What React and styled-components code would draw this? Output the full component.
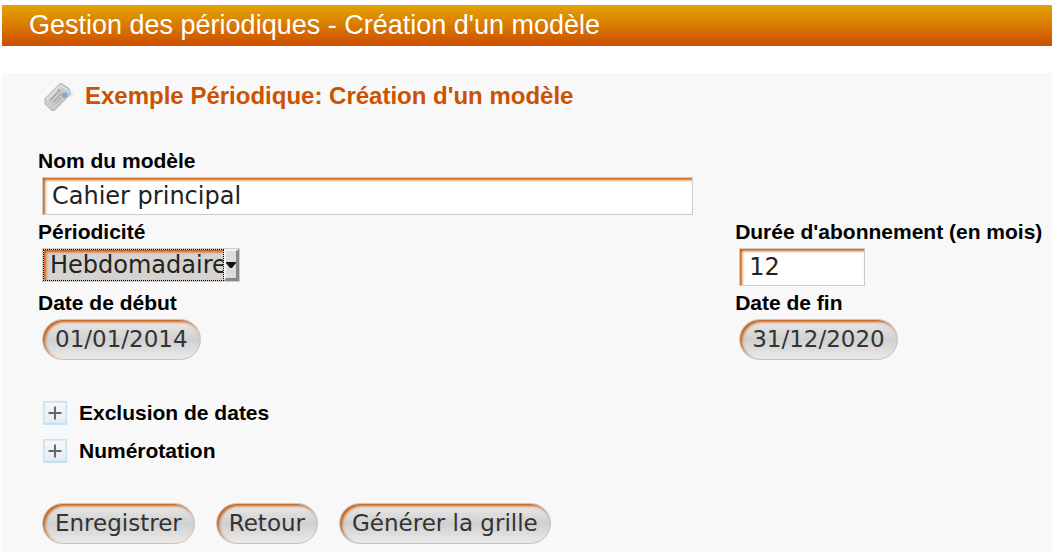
import React, { useState } from "react";
import styled, { createGlobalStyle, css } from "styled-components";

const GlobalStyle = createGlobalStyle`
  *, *::before, *::after { box-sizing: border-box; }
  html, body, #root { height: 100%; }
  body {
    margin: 0;
    background: #fff;
    color: #000;
    font-family: "Liberation Sans", Arial, sans-serif;
  }
`;

const Page = styled.div`
  display: flex;
  flex-direction: column;
  gap: 27px;
  min-height: 100%;
  padding: 5px 0 0 2px;
`;

const Banner = styled.h1`
  margin: 0;
  padding: 0 27px;
  font-size: 27px;
  font-weight: 400;
  line-height: 41px;
  color: #fff;
  background: linear-gradient(#e4a404, #cc4e00);
`;

const Panel = styled.main`
  flex: 1;
  padding: 7px 0 8px 36px;
  background: #f8f8f8;
`;

const TitleRow = styled.div`
  display: flex;
  align-items: center;
  gap: 10px;
  padding-left: 4px;
  margin-bottom: 37px;
`;

const Title = styled.h2`
  margin: 0;
  font-size: 24px;
  line-height: 32px;
  color: #cc5200;
`;

const Fields = styled.div`
  display: grid;
  grid-template-columns: minmax(0, 11fr) minmax(0, 5fr);
`;

const Field = styled.div`
  display: flex;
  flex-direction: column;
  align-items: flex-start;
  gap: 4px;
  min-height: 71px;
  padding-left: 4px;
  grid-column: ${(p) => (p.$wide ? "1 / -1" : "auto")};
`;

const Label = styled.label`
  margin-left: -4px;
  font-size: 21px;
  font-weight: 700;
  line-height: 24px;
  white-space: nowrap;
`;

const controlText = css`
  font-family: "DejaVu Sans", Verdana, sans-serif;
  font-size: 24px;
`;

const warmEdge = css`
  box-shadow: inset 2px 2px 3px #c85a0a;
`;

const TextInput = styled.input`
  ${controlText}
  width: ${(p) => (p.$short ? "126px" : "100%")};
  max-width: 651px;
  height: 38px;
  padding: 0 9px;
  color: #222;
  background: #fff;
  border: 1px solid #ccc;
  border-radius: 0;
  ${warmEdge}
`;

const SelectBox = styled.div`
  position: relative;
  width: 198px;
  height: 34px;
  border: 1px solid #ccc;
`;

const Select = styled.select`
  ${controlText}
  display: block;
  appearance: none;
  width: 181px;
  height: 32px;
  padding: 0 0 0 6px;
  color: #222;
  background: #d6d2d0;
  border: 1px dotted #000;
  border-radius: 0;
  ${warmEdge}
`;

const SelectArrow = styled.span`
  position: absolute;
  top: 0;
  right: 0;
  display: flex;
  align-items: center;
  justify-content: center;
  width: 15px;
  height: 32px;
  background: #dedbd9;
  border: solid;
  border-width: 2px 3px 3px 2px;
  border-color: #f4f4f4 #888 #888 #f4f4f4;
  pointer-events: none;
`;

const PillButton = styled.button`
  ${controlText}
  height: 41px;
  padding: 0 12px 2px;
  font-size: 23px;
  line-height: 28px;
  color: #333;
  white-space: nowrap;
  background: linear-gradient(#eaeaea, #d0d0d0 50%, #eaeaea);
  border: 1px solid #c4c4c4;
  border-radius: 21px;
  ${warmEdge}
`;

const Sections = styled.div`
  display: flex;
  flex-direction: column;
  align-items: flex-start;
  gap: 14px;
  padding-left: 5px;
  margin-top: 39px;
`;

const SectionToggle = styled.button`
  display: flex;
  align-items: center;
  gap: 12px;
  padding: 0;
  font: 700 21px/24px "Liberation Sans", Arial, sans-serif;
  color: #000;
  background: none;
  border: 0;
`;

const Actions = styled.div`
  display: flex;
  flex-wrap: wrap;
  gap: 21px;
  padding-left: 4px;
  margin-top: 40px;
`;

function TagIcon() {
  return (
    <svg width="33" height="32" viewBox="0 0 33 32" aria-hidden="true">
      <defs>
        <linearGradient id="tag" x1="0" y1="0" x2="1" y2="1">
          <stop offset="0" stopColor="#dedede" />
          <stop offset="1" stopColor="#b8b8b8" />
        </linearGradient>
      </defs>
      <path d="M3 18.500 17 4.500Q18.500 3 20.500 4L27 8.500 28.500 14 12.500 30.500H10L3 24Z" fill="url(#tag)" stroke="#b4b4b4" />
      <path d="M4.500 20 18.500 5.500 26 10.500" fill="none" stroke="#ececec" />
      <path d="M8 20.500 17.500 10.500M11.500 22 19 14M14.500 23.500 21 17M15.500 9.500 19 11.500" stroke="#a8a8a8" strokeWidth="1.500" />
      <path d="M5 23 11 28 27 12" fill="none" stroke="#dadada" />
      <circle cx="22.500" cy="15" r="2.800" fill="#78acd8" />
      <path d="M27 12Q30.500 11 30.500 14L28 17" fill="none" stroke="#d8d8d8" />
    </svg>
  );
}

function ExpandIcon({ open }) {
  return (
    <svg width="24" height="24" viewBox="0 0 24 24" aria-hidden="true">
      <defs>
        <linearGradient id="expand" x1="0" y1="0" x2="0" y2="1">
          <stop offset="0" stopColor="#f6f7f8" />
          <stop offset="1" stopColor="#e5edf2" />
        </linearGradient>
      </defs>
      <rect width="24" height="24" rx="1" fill="#c5e1f1" />
      <rect x="1" y="1" width="22" height="21" fill="#d9eaf4" />
      <rect x="2" y="2" width="20" height="19" fill="url(#expand)" />
      <path d={open ? "M5.500 12H18.500" : "M5.500 12H18.500M12 5.500V18.500"} stroke="#686868" strokeWidth="2" />
    </svg>
  );
}

function ArrowIcon() {
  return (
    <svg width="10" height="6" viewBox="0 0 10 6" aria-hidden="true">
      <path d="M0 0H10V1L6 6H4L0 1Z" fill="#111" />
    </svg>
  );
}

function Section({ title }) {
  const [open, setOpen] = useState(false);
  return (
    <SectionToggle type="button" aria-expanded={open} onClick={() => setOpen(!open)}>
      <ExpandIcon open={open} />
      {title}
    </SectionToggle>
  );
}

export default function App() {
  return (
    <>
      <GlobalStyle />
      <Page>
        <Banner>Gestion des périodiques - Création d'un modèle</Banner>
        <Panel>
          <TitleRow>
            <TagIcon />
            <Title>Exemple Périodique: Création d'un modèle</Title>
          </TitleRow>
          <form onSubmit={(e) => e.preventDefault()}>
            <Fields>
              <Field $wide>
                <Label htmlFor="name">Nom du modèle</Label>
                <TextInput id="name" defaultValue="Cahier principal" />
              </Field>
              <Field>
                <Label htmlFor="period">Périodicité</Label>
                <SelectBox>
                  <Select id="period" defaultValue="Hebdomadaire">
                    <option>Hebdomadaire</option>
                  </Select>
                  <SelectArrow>
                    <ArrowIcon />
                  </SelectArrow>
                </SelectBox>
              </Field>
              <Field>
                <Label htmlFor="duration">Durée d'abonnement (en mois)</Label>
                <TextInput id="duration" $short defaultValue="12" />
              </Field>
              <Field>
                <Label htmlFor="start">Date de début</Label>
                <PillButton id="start" type="button">01/01/2014</PillButton>
              </Field>
              <Field>
                <Label htmlFor="end">Date de fin</Label>
                <PillButton id="end" type="button">31/12/2020</PillButton>
              </Field>
            </Fields>
            <Sections>
              <Section title="Exclusion de dates" />
              <Section title="Numérotation" />
            </Sections>
            <Actions>
              <PillButton type="submit">Enregistrer</PillButton>
              <PillButton type="button">Retour</PillButton>
              <PillButton type="button">Générer la grille</PillButton>
            </Actions>
          </form>
        </Panel>
      </Page>
    </>
  );
}
